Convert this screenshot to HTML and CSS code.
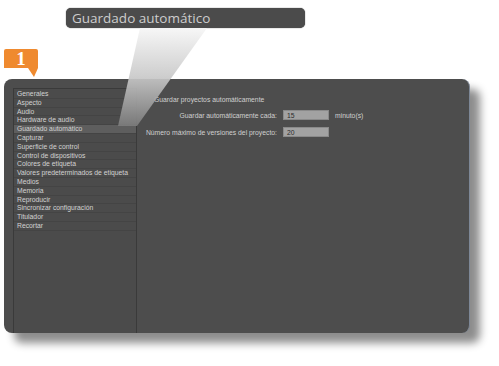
FILE: index.html
```html
<!DOCTYPE html>
<html lang="es">
<head>
  <meta charset="UTF-8">
  <title>Preferencias - Guardado automático</title>
  <link rel="stylesheet" href="styles.css">
</head>
<body>
  <div class="callout">Guardado automático</div>
  <div class="step">1</div>
  <div class="window">
    <ul class="sidebar">
      <li>Generales</li>
      <li>Aspecto</li>
      <li>Audio</li>
      <li>Hardware de audio</li>
      <li class="active">Guardado automático</li>
      <li>Capturar</li>
      <li>Superficie de control</li>
      <li>Control de dispositivos</li>
      <li>Colores de etiqueta</li>
      <li>Valores predeterminados de etiqueta</li>
      <li>Medios</li>
      <li>Memoria</li>
      <li>Reproducir</li>
      <li>Sincronizar configuración</li>
      <li>Titulador</li>
      <li>Recortar</li>
    </ul>
    <div class="pane">
      <div class="pane-title">Guardar proyectos automáticamente</div>
      <div class="form">
        <label>Guardar automáticamente cada:</label>
        <div class="field">15</div>
        <span class="unit">minuto(s)</span>
        <label>Número máximo de versiones del proyecto:</label>
        <div class="field">20</div>
        <span></span>
      </div>
    </div>
  </div>
  <!-- zoom cone from the callout to the selected item -->
  <svg class="cone" width="499" height="366" viewBox="0 0 499 366">
    <defs>
      <linearGradient id="coneFill" x1="0" y1="28" x2="0" y2="126" gradientUnits="userSpaceOnUse">
        <stop offset="0" stop-color="#f6f6f6"/>
        <stop offset="0.5" stop-color="#c9c9c9"/>
        <stop offset="1" stop-color="#7c7c7c"/>
      </linearGradient>
    </defs>
    <polygon points="140,28 207,28 137,126 118,126" fill="url(#coneFill)" opacity="0.92"/>
  </svg>
</body>
</html>
```

FILE: styles.css
```css
* { box-sizing: border-box; }
body { margin: 0; padding-top: 8px; width: 499px; height: 366px; background: #fff; position: relative; overflow: hidden; font-family: "Liberation Sans", Arial, sans-serif; }

.callout { margin-left: 66px; width: 239px; height: 20px; background: #4b4b4b; color: #cdcdcd; border-radius: 5px; padding-left: 6px; font-family: "Open Sans", sans-serif; font-size: 13.5px; line-height: 20px; box-shadow: 0 0 1px #222; }

.step { position: relative; margin: 21px 0 0 4px; width: 34px; height: 19px; background: #ef8a2f; border-radius: 2px 2px 0 0; color: #fff; font-family: "Liberation Serif", serif; font-weight: bold; font-size: 19px; line-height: 20px; text-align: center; }
.step::after { content: ""; position: absolute; left: 24px; top: 19px; border-left: 6px solid transparent; border-right: 4px solid transparent; border-top: 9px solid #ef8a2f; }

.window { display: flex; margin: 11px 0 0 4px; width: 466px; height: 254px; background: #4d4d4d; border-radius: 8px; border-right: 1px solid #7d8796; padding: 9px 0 0 9px; box-shadow: 10px 10px 9px rgba(0, 0, 0, 0.45); }

.sidebar { list-style: none; margin: 0; padding: 1px 0 0; width: 124px; height: 245px; background: #4b4b4b; border: 1px solid #3a3a3a; border-bottom: 0; }
.sidebar li { height: 8.8px; line-height: 8.8px; padding-left: 3px; font-size: 6.8px; color: #d2d2d2; border-bottom: 1px solid #444; white-space: nowrap; }
.sidebar li.active { background: #5e5e5e; }

.pane { flex: 1; padding-top: 6px; color: #d0d0d0; font-size: 6.8px; }
.pane-title { height: 12px; line-height: 12px; padding-left: 17px; }
.form { display: grid; grid-template-columns: 140px 46px auto; column-gap: 6px; row-gap: 7px; margin-top: 4px; align-items: center; }
.form label { text-align: right; white-space: nowrap; }
.field { height: 10px; line-height: 9px; padding-left: 3px; background: #a2a2a2; border: 1px solid #8a8a8a; color: #2c2c2c; }

.cone { position: absolute; left: 0; top: 0; pointer-events: none; }
```
